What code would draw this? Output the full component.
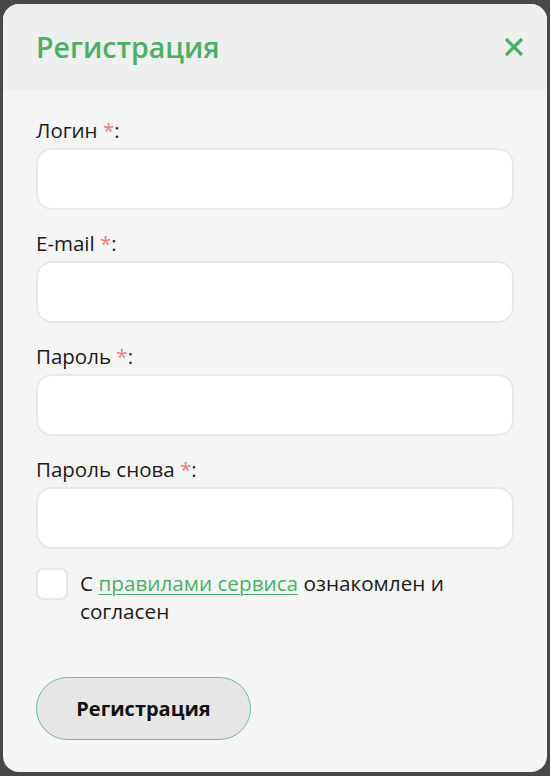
import React from "react";

const classes = {
  page: "w-[550px] h-[776px] bg-[#484848] pt-[4px] px-[3px] font-['Open_Sans',sans-serif]",
  modal: "w-[544px] h-[768px] rounded-[16px] overflow-hidden bg-[#f4f5f4] flex flex-col",
  header: "h-[86px] shrink-0 bg-[#eef0ef] flex items-center justify-between pl-[33px] pr-[24px]",
  title: "text-[28.5px] font-semibold text-[#4caf65] leading-none",
  body: "px-[33px] pt-[28px] flex flex-col",
  field: "flex flex-col mb-[21px]",
  label: "text-[20.5px] leading-[24px] text-[#1a1a1a] mb-[6px]",
  star: "text-[#f07b75]",
  input: "h-[62px] w-full rounded-[16px] bg-white border-2 border-[#e9e9e9] outline-none px-4 text-[18px]",
  agree: "flex items-start gap-[12px] -mt-[2px]",
  checkbox: "w-[32px] h-[32px] shrink-0 rounded-[7px] bg-white border-2 border-[#e6e6e6]",
  agreeText: "text-[20.7px] leading-[28px] text-[#1a1a1a] mt-[1px]",
  link: "text-[#4caf65] underline underline-offset-[3px] decoration-1",
  button: "mt-[52px] w-[215px] h-[63px] rounded-full bg-[#e6e6e6] border border-[#6cc283] text-[20px] font-bold text-[#111]",
};

const fields = ["Логин", "E-mail", "Пароль", "Пароль снова"];

const App = () => {
  return (
    <div className={classes.page}>
      <div className={classes.modal}>
        <div className={classes.header}>
          <h2 className={classes.title}>Регистрация</h2>
          <svg width="22" height="22" viewBox="0 0 22 22" className="mr-[-2px]">
            <path
              d="M3 3 L19 19 M19 3 L3 19"
              stroke="#4caf65"
              strokeWidth="3.2"
              strokeLinecap="butt"
            />
          </svg>
        </div>

        <div className={classes.body}>
          {fields.map((name) => (
            <div key={name} className={classes.field}>
              <label className={classes.label}>
                {name} <span className={classes.star}>*</span>:
              </label>
              <input type="text" className={classes.input} />
            </div>
          ))}

          {/* Terms agreement */}
          <div className={classes.agree}>
            <div className={classes.checkbox}></div>
            <p className={classes.agreeText}>
              С <span className={classes.link}>правилами сервиса</span>{" "}
              ознакомлен и согласен
            </p>
          </div>

          <button className={classes.button}>Регистрация</button>
        </div>
      </div>
    </div>
  );
};

export default App;
